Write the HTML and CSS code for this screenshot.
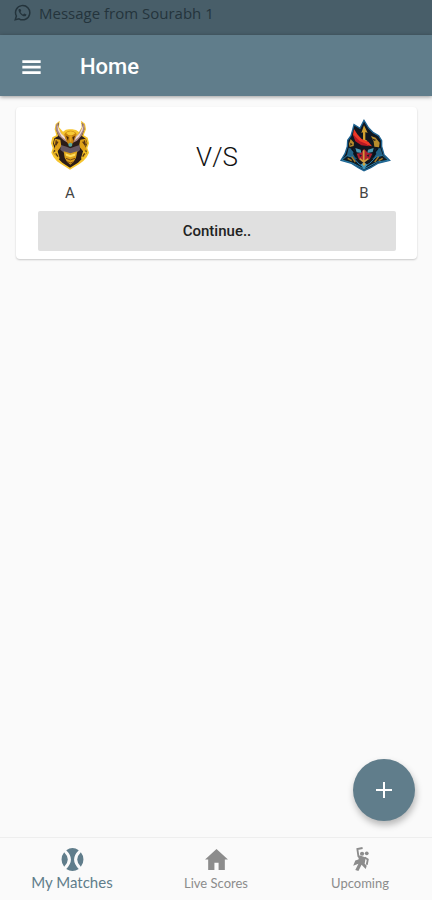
FILE: index.html
```html
<!DOCTYPE html>
<html lang="en">
<head>
<meta charset="utf-8">
<meta name="viewport" content="width=device-width, initial-scale=1">
<title>Home</title>
<link rel="stylesheet" href="styles.css">
</head>
<body>
<div class="status">
  <svg class="status-icon" viewBox="0 0 24 24" aria-hidden="true"><path d="M3 21l1.500-5A9.500 9.500 0 1 1 8 19.700z" fill="none" stroke="currentColor" stroke-width="2"/><path d="M8 6.500c-3 2.500 5 12 9 9.500l1-2-3-1.500-1.500 1.500c-1.500-.5-3-2-3.500-3.500L11 9 9.800 6.500z" fill="currentColor"/></svg>
  <span>Message from Sourabh 1</span>
</div>
<header class="appbar">
  <button class="menu" type="button" aria-label="Menu"><svg viewBox="0 0 24 24"><path d="M2 6h20M2 12h20M2 18h20" fill="none" stroke="currentColor" stroke-width="3"/></svg></button>
  <h1>Home</h1>
</header>
<main class="content">
  <article class="card">
    <div class="match">
      <div class="team">
        <svg class="crest" viewBox="0 0 192 192" aria-hidden="true">
          <g transform="translate(5 -9)">
          <path d="M60 32L48 42 45 58 50 76 38 82 34 100 39 114 35 128 42 142 52 154 64 162 91 179 119 162 131 153 141 142 148 128 143 114 148 100 144 83 132 76 139 58 136 41 124 32 126 52 118 66Q110 58 98 58H88Q78 58 70 65L58 52z" fill="#f6c52f"/>
          <path d="M58 38L50 46 49 58 56 78 44 85 40 100 44 114 41 128 56 146 68 158 91 173 115 158 127 146 142 128 138 114 143 99 139 87 127 78 134 58 132 45 126 38 129 53 119 74 107 84H76L63 71 54 54z" fill="#2a1c18"/>
          <path d="M56 37L49 46 48 58 57 77 72 91 84 98 80 84 66 73 56 56z" fill="#a88580"/>
          <path d="M128 37l6 9 1 12-9 19-14 15-12 6 4-14 13-13 10-17z" fill="#a88580"/>
          <path d="M53 46l2 15 11 19 14 11-4-10-12-11zM131 46l-2 15-11 19-13 11 4-10 11-11z" fill="#f2dcd5"/>
          <path d="M74 73Q80 62 93 62t18 11l-4 10-8 17-7 8-8-8-8-16z" fill="#c88310"/>
          <path d="M79 69Q84 64 93 64t14 6l-8 5H86z" fill="#f7c934"/>
          <path d="M79 77l8 5-2 11zM106 77l-8 5 3 11z" fill="#43240f"/>
          <path d="M89 76h8l-2 19h-4z" fill="#e2a41c"/>
          <circle cx="92" cy="104" r="6" fill="#5ba79a"/>
          <path d="M46 86l16 3 3 20-13 17-10-7 5-10-5-10z" fill="#dfa219"/>
          <path d="M138 86l-16 3-4 20 14 17 9-7-4-10 5-10z" fill="#dfa219"/>
          <path d="M41 127l12-6 7 24-5 5zM142 127l-11-6-7 24 5 5z" fill="#f0bc23"/>
          <path d="M64 105l17 5 11 5 12-5 16-5 1 15-10 8-3 17H77l-4-17-11-9z" fill="#655762"/>
          <path d="M72 124l20 6 21-6-4 19-7 12-10 9-10-9-7-12z" fill="#dca119"/>
          <path d="M77 130l15 5 16-5-2 7-14 5-13-5z" fill="#ffdd5c"/>
          <path d="M79 145l13 5 14-5M83 155l9 4 10-4" fill="none" stroke="#7c4b15" stroke-width="3"/>
          <path d="M50 91l-2 15 7-11M134 91l3 15-8-11M48 130l7 10M135 130l-6 10" fill="none" stroke="#5a3512" stroke-width="4"/>
          </g>
        </svg>
        <span>A</span>
      </div>
      <strong class="versus">V/S</strong>
      <div class="team">
        <svg class="crest" viewBox="0 0 192 192" aria-hidden="true">
          <g transform="translate(-3 -12)">
          <path d="M99 34L87 58 69 47 65 63 60 80 50 94 49 112 42 134 30 154 62 163 82 176 99 185 119 176 140 163 176 154 159 137 152 112 152 95 143 80 127 71 113 57z" fill="#101720" stroke="#1e6391" stroke-width="4"/>
          <path d="M99 49l-8 23 5-2v22l-6 4 10 9 9-10-6-3V69l7 3z" fill="#d2a12f"/>
          <path d="M69 60l-3 17 10 17 20 12 27 6-11-14-20-8-13-14z" fill="#ef3827"/>
          <path d="M65 75l8 22 18 12 23 3-7-7-20-8z" fill="#b81924"/>
          <path d="M59 90l10 11-1 10-12 3-2-10zM120 81l14 5 12 15-2 14-14-2-2-15z" fill="#b78c2c"/>
          <path d="M122 88l14 5-7 3zM58 101l7 5-7 4z" fill="#2b2519"/>
          <path d="M53 116l17 7-4 12 12 15-26-3-5-6zM148 116l-16 7 4 12-12 15 27-3 5-6z" fill="#236387"/>
          <path d="M62 119l10 12 2 14M140 119l-10 12-3 14" fill="none" stroke="#07121d" stroke-width="5"/>
          <path d="M73 117l16 5 2 10-14-2zM128 117l-17 5-2 10 16-3z" fill="#4b97b1"/>
          <path d="M77 134l14-3 8-12 11 12 14 3-8 17-9 1-8 10-10-11-6-2z" fill="#ac202f"/>
          <path d="M85 136l8 3-6 5zM116 136l-9 3 5 5z" fill="#172332"/>
          <path d="M98 124v35M86 149l12 10 14-10" fill="none" stroke="#cf9b3d" stroke-width="5"/>
          <path d="M33 153l15-13 18 5 18 20 15 9 17-11 19-19 20-5 17 15-34 5-39 21-35-18z" fill="#101b22" stroke="#297da9" stroke-width="3"/>
          <path d="M50 148l12 7m0-12l11 16M155 148l-12 7m0-12l-12 16" stroke="#a97c27" stroke-width="4"/>
          <path d="M89 167l10-7 10 7-10 15z" fill="#4299bd"/>
          <path d="M94 165l5-6 5 6-5 7z" fill="#d0a33d"/>
          </g>
        </svg>
        <span>B</span>
      </div>
    </div>
    <button class="continue" type="button">Continue..</button>
  </article>
</main>
<footer class="bottom">
  <button class="add" type="button" aria-label="Add match"><svg viewBox="0 0 24 24"><path d="M12 4v16M4 12h16" fill="none" stroke="currentColor" stroke-width="2"/></svg></button>
  <nav class="tabs" aria-label="Main">
    <a class="tab active" href="#matches">
      <svg viewBox="0 0 24 24" aria-hidden="true"><path d="M6 3A11 11 0 0 1 18 3Q9 12 18 21A11 11 0 0 1 6 21Q15 12 6 3z" fill="currentColor"/><path d="M4 5Q11 12 4 19A11 11 0 0 1 4 5zM20 5Q13 12 20 19A11 11 0 0 0 20 5z" fill="currentColor"/></svg>
      <span>My Matches</span>
    </a>
    <a class="tab" href="#live">
      <svg viewBox="0 0 24 24" aria-hidden="true"><path d="M12 2L1 12h3v10h6v-7h4v7h6V12h3z" fill="currentColor"/></svg>
      <span>Live Scores</span>
    </a>
    <a class="tab" href="#upcoming">
      <svg viewBox="0 0 24 24" aria-hidden="true"><circle cx="13.500" cy="6.500" r="2" fill="currentColor"/><circle cx="18" cy="6" r="1.800" fill="currentColor"/><path d="M14 1l-5 1 1 7 3 3M16 10l3 2-1 5" fill="none" stroke="currentColor" stroke-width="1.800"/><path d="M11 8l6 2-1 6 2 2-1 3-4-4-3 6-3-1 3-6-5 2 2-5 3-1z" fill="currentColor"/></svg>
      <span>Upcoming</span>
    </a>
  </nav>
</footer>
</body>
</html>
```
FILE: styles.css
```css
* {
  box-sizing: border-box;
}

body {
  margin: 0;
  min-height: 100vh;
  display: flex;
  flex-direction: column;
  background: #fafafa;
  color: #111;
  font-family: Roboto, "Open Sans", sans-serif;
}

button {
  border: 0;
  font: inherit;
  cursor: pointer;
}

svg {
  display: block;
}

.status {
  display: flex;
  align-items: center;
  gap: 8px;
  padding: 3px 12px 12px 13px;
  background: #485e69;
  color: #24343c;
  font-family: "Open Sans", sans-serif;
  font-size: 15px;
  line-height: 20px;
}

.status-icon {
  width: 18px;
  height: 18px;
}

.appbar {
  display: flex;
  align-items: center;
  gap: 37px;
  padding: 20px 20px 17px;
  background: #607d8b;
  color: #fff;
  box-shadow: 0 1px 4px rgba(0, 0, 0, 0.4);
}

.menu {
  padding: 0;
  background: none;
  color: inherit;
}

.menu svg {
  width: 23px;
  height: 22px;
}

.appbar h1 {
  margin: 0;
  font-size: 22px;
  font-weight: 500;
  line-height: 24px;
}

.content {
  flex: 1;
  padding: 11px 15px 11px 16px;
}

.card {
  padding: 6px 21px 8px 22px;
  border-radius: 4px;
  background: #fff;
  box-shadow: 0 1px 2px rgba(0, 0, 0, 0.2);
}

.match {
  display: flex;
  align-items: center;
  justify-content: space-between;
}

.team {
  display: flex;
  flex-direction: column;
  align-items: center;
  gap: 4px;
  color: #444;
  font-size: 15px;
  line-height: 24px;
}

.crest {
  width: 64px;
  height: 64px;
}

.versus {
  padding-bottom: 4px;
  font-size: 26px;
  font-weight: 300;
  line-height: 32px;
}

.continue {
  display: block;
  width: 100%;
  margin-top: 6px;
  padding: 10px;
  border-radius: 2px;
  background: #e0e0e0;
  color: #222;
  font-size: 15px;
  font-weight: 500;
  line-height: 20px;
}

.bottom {
  position: relative;
}

.add {
  position: absolute;
  right: 17px;
  bottom: 79px;
  display: grid;
  place-items: center;
  width: 62px;
  height: 62px;
  padding: 0;
  border-radius: 50%;
  background: #607d8b;
  color: #fff;
  box-shadow: 1px 4px 7px rgba(0, 0, 0, 0.28);
}

.add svg {
  width: 24px;
  height: 24px;
}

.tabs {
  display: grid;
  grid-template-columns: repeat(3, 1fr);
  border-top: 1px solid #eee;
}

.tab {
  display: flex;
  flex-direction: column;
  align-items: center;
  gap: 1px;
  padding: 9px 0 7px;
  color: #8c8c8c;
  font-family: Lato, sans-serif;
  font-size: 13px;
  line-height: 20px;
  text-decoration: none;
}

.tab svg {
  width: 25px;
  height: 25px;
}

.tab.active {
  gap: 0;
  color: #607d8b;
  font-size: 15px;
}
```
